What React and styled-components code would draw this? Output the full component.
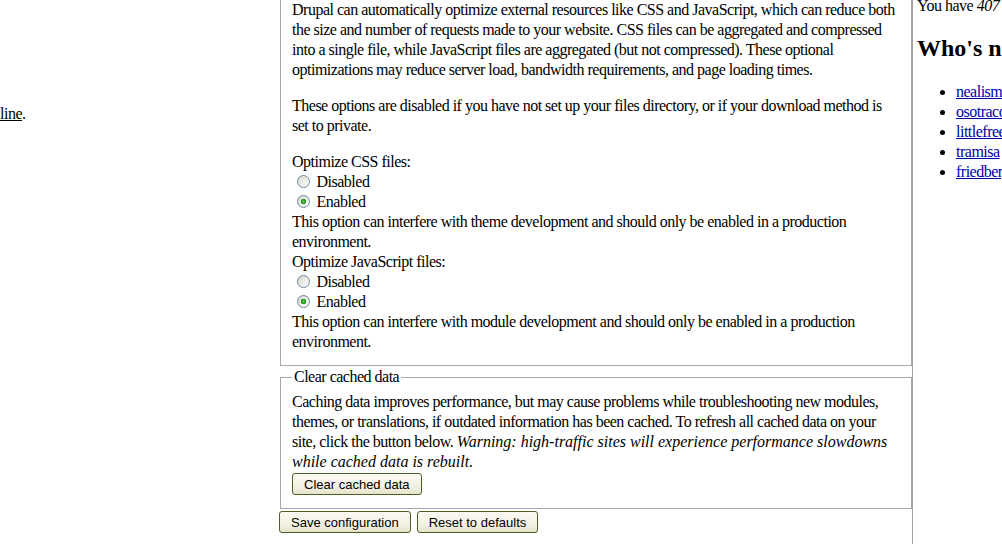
import React from 'react'
import styled, { createGlobalStyle } from 'styled-components'

const GlobalStyle = createGlobalStyle`
    html, body {
        margin: 0;
        padding: 0;
        background: #ffffff;
        overflow: hidden;
    }
    body {
        font-family: "Liberation Serif", "Times New Roman", serif;
        font-size: 16px;
        line-height: 20px;
        letter-spacing: -0.5px;
        color: #000000;
    }
`

const Page = styled.div`
    display: grid;
    grid-template-columns: 280px 632px 90px;
    width: 1002px;
    height: 544px;
    overflow: hidden;
`

const LeftBar = styled.div`
    padding-top: 104px;
    white-space: nowrap;
`

const Main = styled.div`
    display: flex;
    flex-direction: column;
`

const RightBar = styled.div`
    border-left: 1px solid #a0a0a0;
    padding-left: 4px;
    white-space: nowrap;
`

const Fieldset = styled.fieldset(({ cut }) => `
    margin: ${ cut ? '0' : '2px 0 0 0' };
    min-width: 0;
    border: 1px solid #a7a6aa;
    ${ cut ? 'border-top: 0;' : '' }
    padding: ${ cut ? '0' : '6px' } 13px 13px 11px;
`)

const Legend = styled.legend`
    padding: 0 2px;
    line-height: 18px;
`

const Para = styled.p(({ gap }) => `
    margin: 0 0 ${ gap || 0 }px 0;
`)

const Warning = styled.em`
    letter-spacing: 0;
`

const FormItem = styled.div`
    margin: 0;
`

const RadioRow = styled.label`
    display: block;
`

const Radio = styled.input`
    appearance: none;
    width: 13px;
    height: 13px;
    margin: 0 3px 0 5px;
    vertical-align: -1px;
    border: 1px solid #6f87a3;
    border-radius: 50%;
    background: linear-gradient(135deg, #d4d4cc 0%, #eeeee8 55%, #ffffff 100%);
    box-sizing: border-box;

    &:checked {
        background:
            radial-gradient(circle at 50% 50%, #6ad86a 0, #2aa52a 1.5px, #1f8f1f 2.5px, transparent 3px),
            linear-gradient(135deg, #d4d4cc 0%, #eeeee8 55%, #ffffff 100%);
    }
`

const Button = styled.button`
    display: block;
    height: 22px;
    padding: 0 11px;
    font-family: "Liberation Sans", Arial, sans-serif;
    font-size: 13px;
    letter-spacing: 0;
    color: #000000;
    border: 1px solid #4c5f24;
    border-radius: 3px;
    background: linear-gradient(to bottom, #fbfaf3 0%, #f3f1e3 60%, #e6e3cd 100%);
`

const ButtonRow = styled.div(({ top }) => `
    display: flex;
    gap: 6px;
    margin-top: ${ top || 0 }px;
`)

const Actions = styled(ButtonRow)`
    margin-left: -1px;
`

const Online = styled.p`
    margin: 0;
    line-height: 12px;
`

const Heading = styled.h2`
    margin: 22px 0 0 0;
    font-size: 24px;
    line-height: 28px;
    font-weight: bold;
    letter-spacing: 0;
`

const UserList = styled.ul`
    margin: 20px 0 0 0;
    padding-left: 39px;
`

const UserLink = styled.a`
    color: #0000aa;
    text-decoration: underline;
`

const Underlined = styled.span`
    text-decoration: underline;
`

const users = ['nealismo', 'osotraco', 'littlefreeman', 'tramisa', 'friedberg']

function OptionGroup({ title, name, help }) {
    return (
        <FormItem>
            <div>{ title }</div>
            <RadioRow>
                <Radio type="radio" name={name} value="0" />
                {' '}Disabled
            </RadioRow>
            <RadioRow>
                <Radio type="radio" name={name} value="1" defaultChecked />
                {' '}Enabled
            </RadioRow>
            <div>{ help }</div>
        </FormItem>
    )
}

function App () {
    return (
        <Page>
            <GlobalStyle />
            <LeftBar>
                <Underlined>line</Underlined>.
            </LeftBar>
            <Main>
                <Fieldset cut>
                    <Para gap={16}>
                        Drupal can automatically optimize external resources like CSS and JavaScript, which can reduce both the size and number of requests made to your website. CSS files can be aggregated and compressed into a single file, while JavaScript files are aggregated (but not compressed). These optional optimizations may reduce server load, bandwidth requirements, and page loading times.
                    </Para>
                    <Para gap={16}>
                        These options are disabled if you have not set up your files directory, or if your download method is set to private.
                    </Para>
                    <OptionGroup
                        title="Optimize CSS files:"
                        name="preprocess_css"
                        help="This option can interfere with theme development and should only be enabled in a production environment."
                    />
                    <OptionGroup
                        title="Optimize JavaScript files:"
                        name="preprocess_js"
                        help="This option can interfere with module development and should only be enabled in a production environment."
                    />
                </Fieldset>
                <Fieldset>
                    <Legend>Clear cached data</Legend>
                    <Para>
                        Caching data improves performance, but may cause problems while troubleshooting new modules, themes, or translations, if outdated information has been cached. To refresh all cached data on your site, click the button below. <Warning>Warning: high-traffic sites will experience performance slowdowns while cached data is rebuilt.</Warning>
                    </Para>
                    <ButtonRow top={1}>
                        <Button type="button">Clear cached data</Button>
                    </ButtonRow>
                </Fieldset>
                <Actions top={2}>
                    <Button type="button">Save configuration</Button>
                    <Button type="button">Reset to defaults</Button>
                </Actions>
            </Main>
            <RightBar>
                <Online>You have <em>407 new posts</em>.</Online>
                <Heading>Who's new</Heading>
                <UserList>
                    { users.map(u => (
                        <li key={u}><UserLink href="#">{ u }</UserLink></li>
                    )) }
                </UserList>
            </RightBar>
        </Page>
    )
}

export default App
